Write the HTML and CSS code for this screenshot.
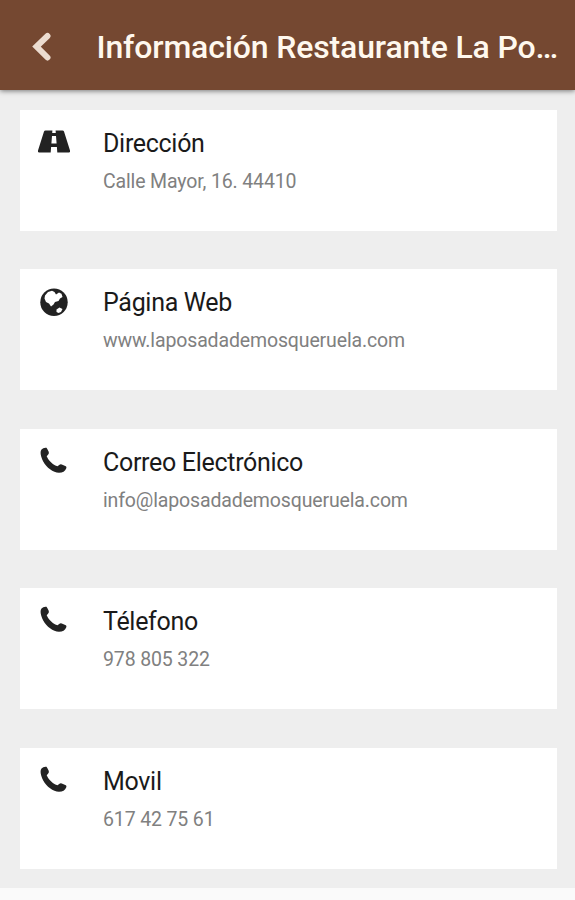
FILE: index.html
```html
<!DOCTYPE html>
<html lang="es">
<head>
    <meta charset="UTF-8">
    <meta name="viewport" content="width=device-width, initial-scale=1.0">
    <title>Información Restaurante</title>
    <link rel="stylesheet" href="styles.css">
</head>
<body>
    <svg class="sprite" width="0" height="0">
        <symbol id="icon-phone" viewBox="0 0 28 28">
            <path d="M1.500 2.500Q3.500 .3 6.500 .8Q7.500 2 8.800 5Q9.200 6.500 8 7.800L6.700 9.200Q8.800 14.500 15.300 18.600L17.500 19.300L19.500 17.700Q20.500 17 21.800 17.600L25.800 19.200Q26.800 19.800 26.300 21.200Q24.500 25.700 19 25.700C13 25.500 6.500 20.500 3.200 14.500Q.3 8.800.6 5Q.7 3.500 1.500 2.500Z"/>
        </symbol>
    </svg>

    <header class="header">
        <svg class="back" viewBox="0 0 20 30">
            <path d="M15.500 4L4.500 14.500L15.500 25.500"/>
        </svg>
        <h1>Información Restaurante La Po…</h1>
    </header>

    <main class="content">
        <div class="card">
            <svg class="icon icon-road" viewBox="0 0 34 28">
                <path fill-rule="evenodd" d="M8.500 3.500H15.400L15.200 6H18.800L18.600 3.500H25.500Q26.600 3.500 27 4.600L33 23.500Q33.500 25.500 32 25.500H20.300L19.900 20H14.100L13.700 25.500H2Q.5 25.500 1 23.500L7 4.600Q7.400 3.500 8.500 3.500ZM15 9L14.400 16.500H19.600L19 9Z"/>
            </svg>
            <div class="info">
                <h2>Dirección</h2>
                <p>Calle Mayor, 16. 44410</p>
            </div>
        </div>
        <div class="card">
            <svg class="icon icon-globe" viewBox="0 0 28 28">
                <circle cx="14" cy="14.200" r="13.700"/>
                <path class="land" d="M5 7.500L8 4L12 2.700L14.500 4L16 6.500L19 4.500L21.500 5.800L22.500 9L20 10.500L18.500 13L15 14L13.500 16.500L11 18.500L9 15.500L6 14L4.500 10.500ZM16.500 21.500L19.500 19.500L22.500 21L21 24L18.500 25L16.500 24Z"/>
            </svg>
            <div class="info">
                <h2>Página Web</h2>
                <p>www.laposadademosqueruela.com</p>
            </div>
        </div>
        <div class="card">
            <svg class="icon"><use href="#icon-phone"/></svg>
            <div class="info">
                <h2>Correo Electrónico</h2>
                <p>info@laposadademosqueruela.com</p>
            </div>
        </div>
        <div class="card">
            <svg class="icon"><use href="#icon-phone"/></svg>
            <div class="info">
                <h2>Télefono</h2>
                <p>978 805 322</p>
            </div>
        </div>
        <div class="card">
            <svg class="icon"><use href="#icon-phone"/></svg>
            <div class="info">
                <h2>Movil</h2>
                <p>617 42 75 61</p>
            </div>
        </div>
    </main>
</body>
</html>
```

FILE: styles.css
```css
* {
    box-sizing: border-box;
}
body {
    margin: 0;
    height: 900px;
    overflow: hidden;
    font-family: Roboto, sans-serif;
    background: #fafafa;
}
.sprite {
    display: block;
}
.header {
    position: relative;
    display: flex;
    align-items: center;
    height: 90px;
    padding: 4px 0 0 32px;
    background: #754831;
    box-shadow: 0 1px 5px rgba(0, 0, 0, 0.5);
}
.header h1 {
    margin: 0 0 0 44.5px;
    font-size: 32px;
    font-weight: 500;
    line-height: 40px;
    letter-spacing: -0.15px;
    color: #fff8ee;
    white-space: nowrap;
}
.back {
    width: 20px;
    height: 30px;
    margin-top: -1px;
    fill: none;
    stroke: #ecdcd0;
    stroke-width: 6;
    stroke-linecap: round;
}
.content {
    display: flex;
    flex-direction: column;
    gap: 38.5px;
    height: 798px;
    padding: 19.5px 18.5px 0 20px;
    background: #eee;
}
.card {
    display: flex;
    flex-shrink: 0;
    height: 121px;
    padding: 18px 20px;
    background: #fff;
}
.icon {
    width: 28px;
    height: 28px;
    margin-right: 35px;
    fill: #222;
}
.icon-road {
    width: 34px;
    margin: -1px 32px 0 -3px;
}
.icon-globe {
    margin-top: 1px;
}
.land {
    fill: #fff;
}
.info {
    padding-top: 1px;
}
.info h2 {
    margin: 0;
    font-size: 25px;
    font-weight: 400;
    line-height: 30px;
    letter-spacing: -0.3px;
    color: #1a1a1a;
}
.info p {
    margin: 11px 0 0;
    font-size: 19.5px;
    line-height: 24px;
    letter-spacing: -0.14px;
    color: #808080;
}
```
